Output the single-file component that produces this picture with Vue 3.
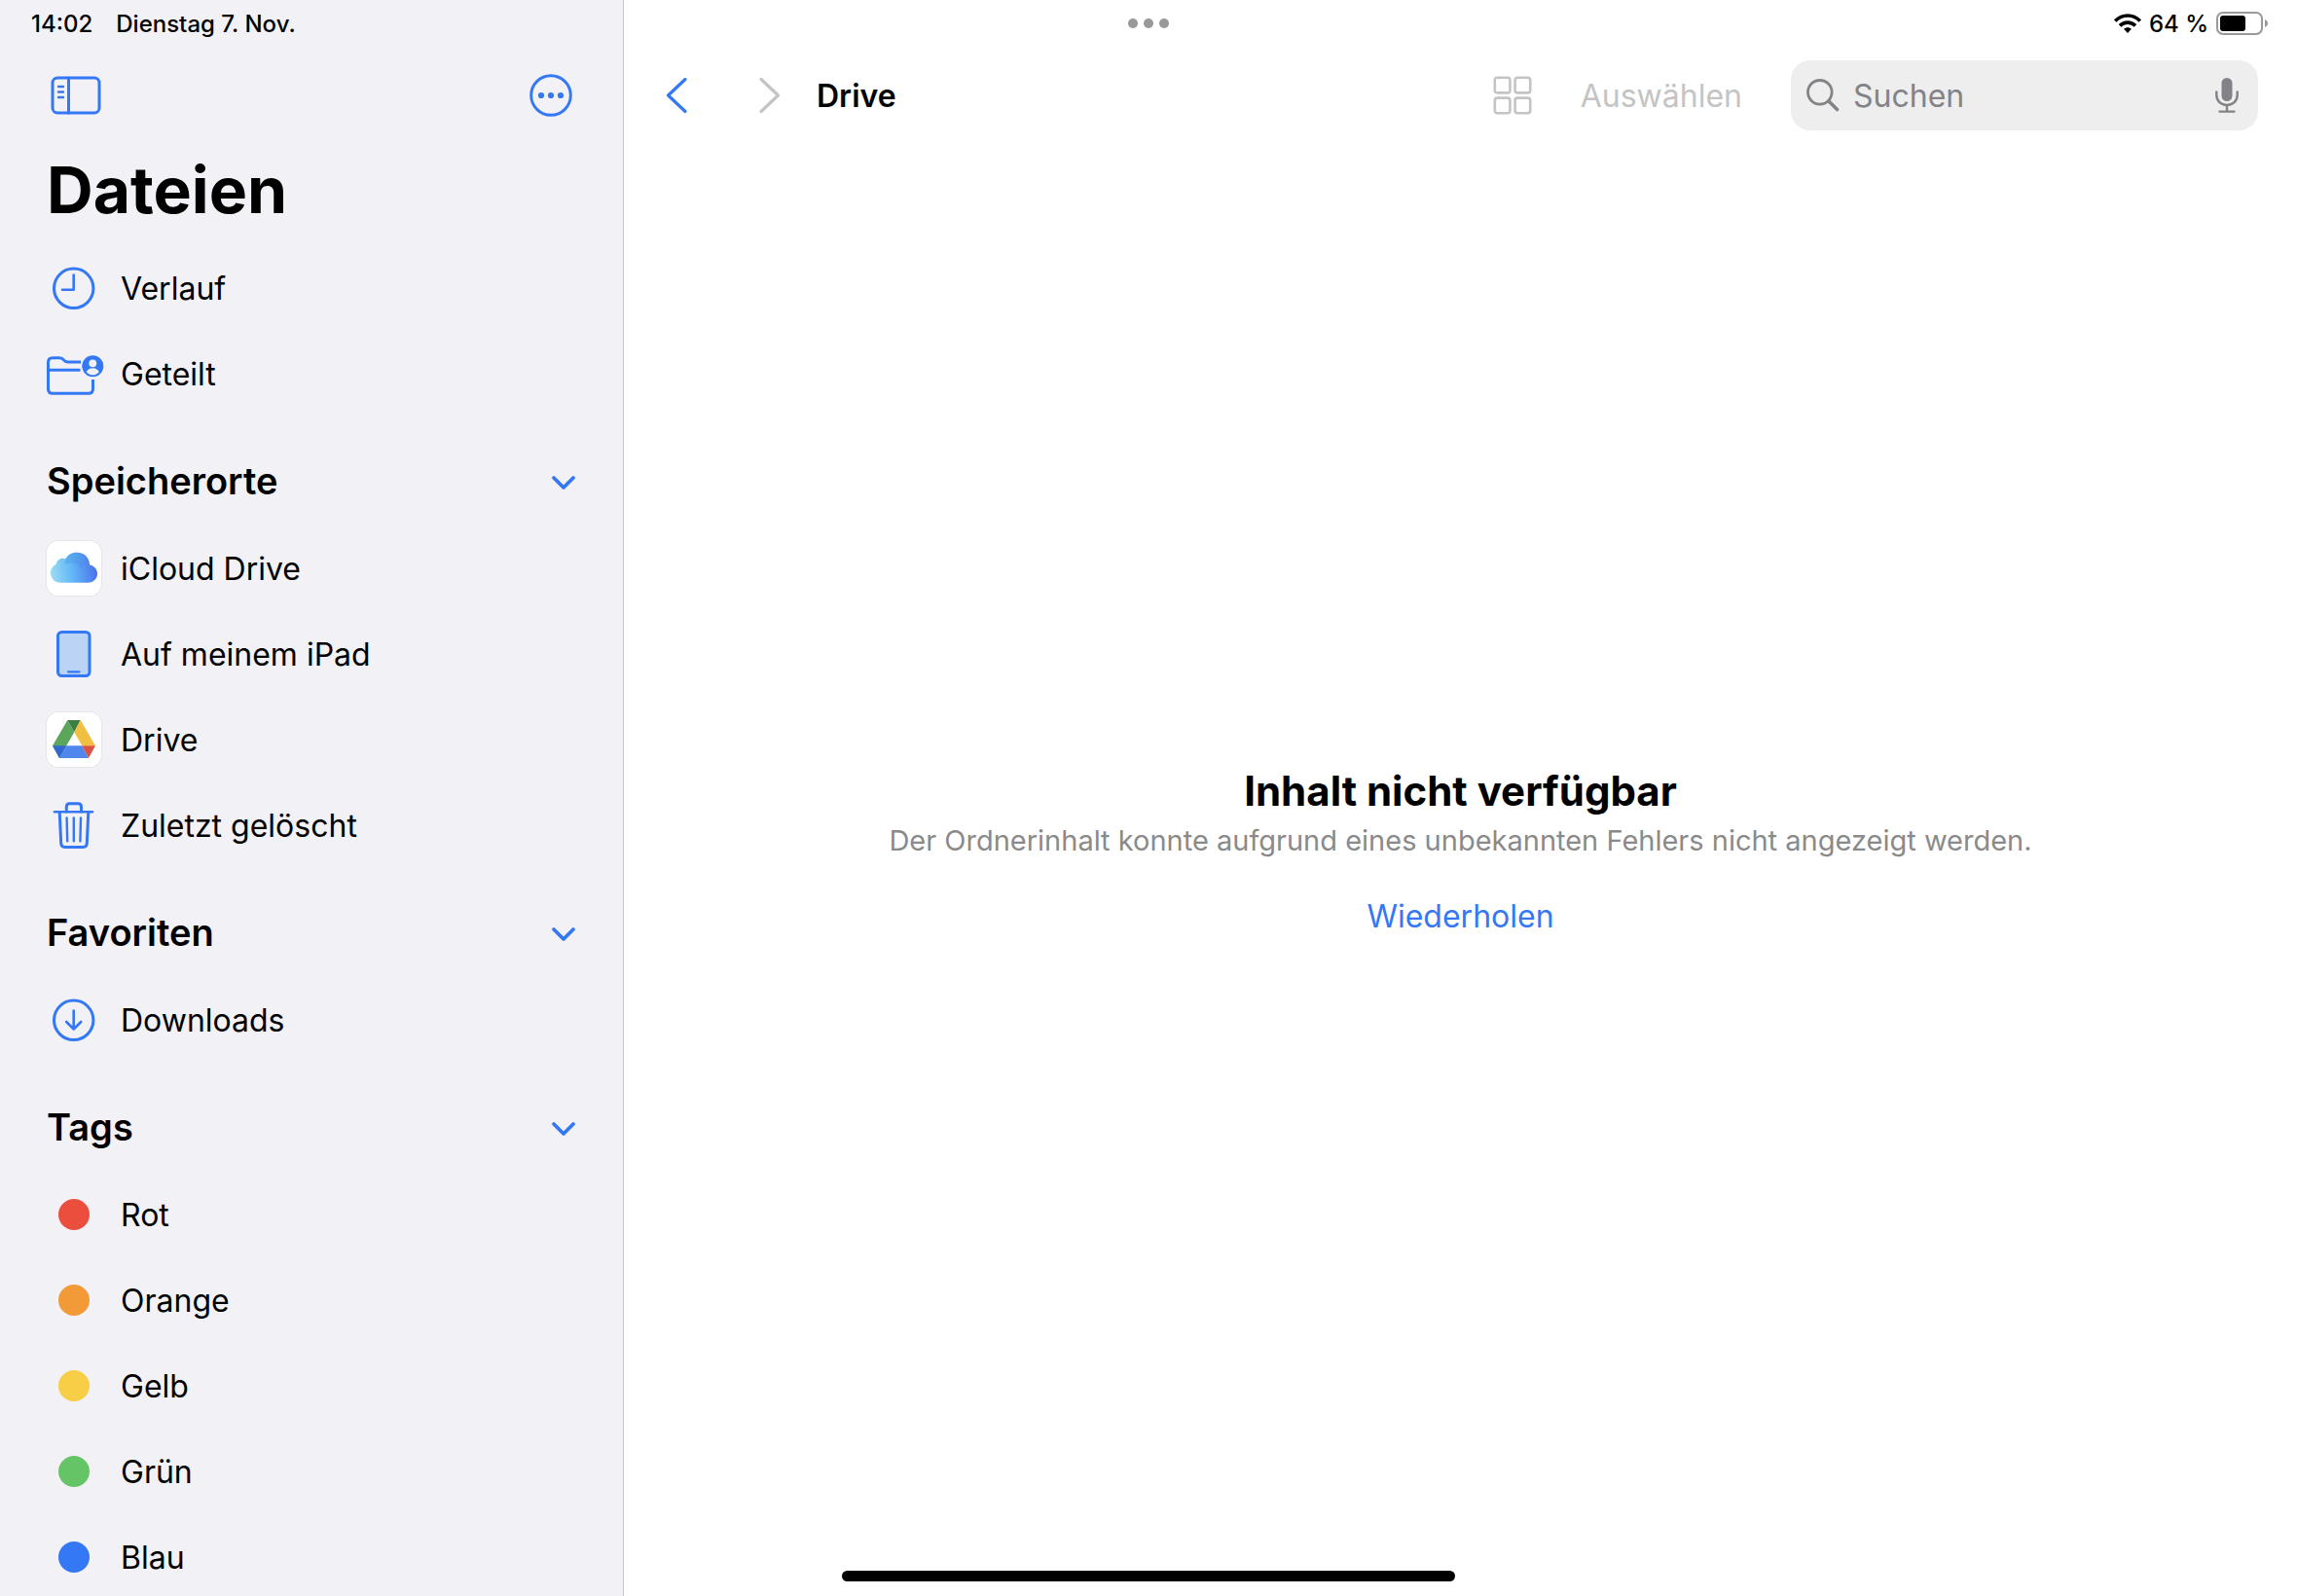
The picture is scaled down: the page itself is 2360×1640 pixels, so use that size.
<script setup>
import { ref, reactive } from 'vue'

const search = ref('')
const collapsed = reactive({})

const quickLinks = [
  { label: 'Verlauf', icon: 'clock' },
  { label: 'Geteilt', icon: 'shared' },
]

const sections = [
  {
    title: 'Speicherorte',
    items: [
      { label: 'iCloud Drive', icon: 'icloud' },
      { label: 'Auf meinem iPad', icon: 'ipad' },
      { label: 'Drive', icon: 'drive' },
      { label: 'Zuletzt gelöscht', icon: 'trash' },
    ],
  },
  {
    title: 'Favoriten',
    items: [{ label: 'Downloads', icon: 'download' }],
  },
  {
    title: 'Tags',
    items: [
      { label: 'Rot', icon: 'tag', color: 'red' },
      { label: 'Orange', icon: 'tag', color: 'orange' },
      { label: 'Gelb', icon: 'tag', color: 'yellow' },
      { label: 'Grün', icon: 'tag', color: 'green' },
      { label: 'Blau', icon: 'tag', color: 'blue' },
    ],
  },
]

const groups = [{ title: '', items: quickLinks }, ...sections]

const toggle = (title) => {
  collapsed[title] = !collapsed[title]
}
</script>

<template>
  <div class="app">
    <aside class="sidebar">
      <div class="status">
        <span>14:02</span>
        <span>Dienstag 7. Nov.</span>
      </div>

      <div class="sidebar-toolbar">
        <button class="icon-btn" type="button" aria-label="Seitenleiste">
          <svg width="52" height="44" viewBox="0 0 52 44" fill="none" stroke="currentColor" stroke-width="3" stroke-linecap="round">
            <rect x="2" y="4" width="48" height="36" rx="5" />
            <path d="M18.5 4v36" />
            <path d="M8 13h5M8 18.5h5M8 24h5" stroke-width="2.4" />
          </svg>
        </button>
        <button class="icon-btn" type="button" aria-label="Mehr">
          <svg width="44" height="44" viewBox="0 0 44 44">
            <circle cx="22" cy="22" r="20.3" fill="none" stroke="currentColor" stroke-width="2.9" />
            <g fill="currentColor">
              <circle cx="12" cy="22" r="3.1" />
              <circle cx="22" cy="22" r="3.1" />
              <circle cx="32" cy="22" r="3.1" />
            </g>
          </svg>
        </button>
      </div>

      <h1 class="title">Dateien</h1>

      <nav class="nav">
        <section v-for="g in groups" :key="g.title">
          <h2 v-if="g.title" class="section-title">
            <button class="section-btn" type="button" :aria-expanded="!collapsed[g.title]" @click="toggle(g.title)">
              <span>{{ g.title }}</span>
              <svg class="chevron" :class="{ closed: collapsed[g.title] }" width="26" height="16" viewBox="0 0 26 16" fill="none" stroke="currentColor" stroke-width="3.8" stroke-linecap="round" stroke-linejoin="round">
                <path d="M3 3l10 10L23 3" />
              </svg>
            </button>
          </h2>

          <ul v-if="!collapsed[g.title]" class="list">
            <li v-for="item in g.items" :key="item.label">
              <a class="row" href="#">
                <span v-if="item.icon === 'tag'" class="icon">
                  <span class="dot" :class="item.color"></span>
                </span>

                <svg v-else-if="item.icon === 'clock'" class="icon line" viewBox="0 0 56 56">
                  <circle cx="27.7" cy="28.3" r="20.2" />
                  <path d="M27.7 14.5v15.2H16" stroke-width="2.6" />
                </svg>

                <svg v-else-if="item.icon === 'shared'" class="icon line" viewBox="0 0 56 56">
                  <path class="butt" d="M35 16H22c-2 0-3-.6-4.2-1.8l-1.2-1.2C15.5 12 14.5 11.8 13 11.8H6c-3 0-4.5 1.5-4.5 4.5v27.5c0 3 1.500 4.500 4.500 4.500h37c3 0 4.500-1.500 4.500-4.500V34" />
                  <path class="butt" d="M1.5 24.2H34.5" />
                  <circle class="solid" cx="47.3" cy="20.3" r="11" />
                  <circle class="hole" cx="47.3" cy="17.3" r="3.9" />
                  <path class="hole" d="M40.8 26.2c1.2-2.8 3.6-4 6.5-4s5.3 1.2 6.5 4c-1.700 2-4 3.1-6.5 3.1s-4.8-1.1-6.5-3.1z" />
                </svg>

                <svg v-else-if="item.icon === 'icloud'" class="icon tile" viewBox="0 0 56 56">
                  <defs>
                    <linearGradient id="cloud" x1="4" y1="36" x2="52" y2="30" gradientUnits="userSpaceOnUse">
                      <stop offset="0" stop-color="#9edcf3" />
                      <stop offset=".45" stop-color="#62b8f7" />
                      <stop offset="1" stop-color="#4a70ec" />
                    </linearGradient>
                    <linearGradient id="puff" x1="18" y1="20" x2="44" y2="24" gradientUnits="userSpaceOnUse">
                      <stop offset="0" stop-color="#54aeea" />
                      <stop offset="1" stop-color="#4c87e8" />
                    </linearGradient>
                  </defs>
                  <path fill="url(#cloud)" d="M14 42.7c-5.6 0-10-4.3-10-9.8 0-4.2 2.3-7.6 5.8-9.1.4-3.5 3.2-6 6.7-6 1 0 2 .2 2.9.6C21.3 14.3 25.6 11.7 31 11.7c7.4 0 12.8 5.3 13 12.6 4.6 1 8 4.7 8 9.3 0 5.2-4.1 9.1-9.2 9.1z" />
                  <path fill="url(#puff)" opacity=".7" d="M19.4 18.4C21.3 14.3 25.6 11.7 31 11.7c7.4 0 12.8 5.3 13 12.6-3.6-.2-6.5 1.3-8.5 4-4.5-6-10.5-7-16.5-4.5-.6-1.8-.4-3.6.4-5.4z" />
                </svg>

                <svg v-else-if="item.icon === 'ipad'" class="icon line" viewBox="0 0 56 56">
                  <rect x="11.5" y="5.5" width="32.5" height="45" rx="4" fill="#bbd3f4" />
                  <path d="M22 46.3h11.5" stroke-width="2.2" />
                </svg>

                <svg v-else-if="item.icon === 'drive'" class="icon tile" viewBox="0 0 56 56">
                  <path fill="#5ba55c" d="M21.3 8L28.3 20.3 20.3 34.3 13 47 6 34.3z" />
                  <path fill="#3d7e40" d="M21.3 8h13.4l-6.4 12.3z" />
                  <path fill="#f1bf42" d="M34.7 8L50 34.3H36.3l-8-14z" />
                  <path fill="#3068cf" d="M6 34.3h14.3L13 47z" />
                  <path fill="#5186ec" d="M20.3 34.3h16L43 47H13z" />
                  <path fill="#d9523f" d="M36.3 34.3H50L43 47z" />
                </svg>

                <svg v-else-if="item.icon === 'trash'" class="icon line" viewBox="0 0 56 56">
                  <path d="M8 14.2h39" stroke-width="2.6" />
                  <path d="M20.3 14V9c0-2 1.2-3.2 3.2-3.2h8.800c2 0 3.2 1.2 3.2 3.2v5" />
                  <path d="M13.2 14.5l1.5 32c.1 2.600 1.5 4 4 4h18.600c2.5 0 3.900-1.400 4-4l1.5-32" />
                  <path d="M20.6 20.5l.6 23.8M27.8 20.5v23.8M35 20.5l-.6 23.8" stroke-width="2.4" />
                </svg>

                <svg v-else class="icon line" viewBox="0 0 56 56">
                  <circle cx="27.7" cy="28.3" r="20.2" />
                  <path d="M27.7 18.5v18.8M20.2 30l7.5 7.5 7.5-7.5" stroke-width="2.6" />
                </svg>

                <span>{{ item.label }}</span>
              </a>
            </li>
          </ul>
        </section>
      </nav>
    </aside>

    <main class="main">
      <div class="status status-right">
        <svg width="28" height="20" viewBox="0 0 28 20" fill="none" stroke="#000" stroke-width="3.6">
          <path d="M1.2 7.6C8.5.2 19.5.2 26.8 7.6" />
          <path d="M6 12.4c4.6-4.4 11.4-4.4 16 0" />
          <path d="M14 20l-4-4.3c2.3-2.1 5.7-2.1 8 0z" fill="#000" stroke="none" />
        </svg>
        <span>64 %</span>
        <svg width="54" height="24" viewBox="0 0 54 24">
          <rect x="1" y="1" width="46" height="22" rx="6" fill="none" stroke="#999" stroke-width="2" />
          <rect x="4" y="4" width="26" height="16" rx="3" fill="#000" />
          <path d="M50 8c4 1.5 4 6.5 0 8z" fill="#999" />
        </svg>
      </div>

      <header class="toolbar">
        <button class="icon-btn" type="button" aria-label="Zurück">
          <svg width="24" height="40" viewBox="0 0 24 40" fill="none" stroke="currentColor" stroke-width="3.2" stroke-linecap="round" stroke-linejoin="round">
            <path d="M21 3.5L3.5 20 21 36.5" />
          </svg>
        </button>
        <button class="icon-btn forward" type="button" aria-label="Vorwärts" disabled>
          <svg width="24" height="40" viewBox="0 0 24 40" fill="none" stroke="currentColor" stroke-width="3.2" stroke-linecap="round" stroke-linejoin="round">
            <path d="M3 3.5L20.5 20 3 36.5" />
          </svg>
        </button>
        <h2 class="folder">Drive</h2>

        <div class="actions">
          <button class="icon-btn" type="button" aria-label="Darstellung" disabled>
            <svg width="40" height="40" viewBox="0 0 40 40" fill="none" stroke="currentColor" stroke-width="2.6">
              <rect x="1.8" y="1.8" width="15.6" height="15.6" rx="2.5" />
              <rect x="22.6" y="1.8" width="15.6" height="15.6" rx="2.5" />
              <rect x="1.8" y="22.6" width="15.6" height="15.6" rx="2.5" />
              <rect x="22.6" y="22.6" width="15.6" height="15.6" rx="2.5" />
            </svg>
          </button>
          <button class="select-btn" type="button" disabled>Auswählen</button>
          <div class="search">
            <svg width="34" height="34" viewBox="0 0 34 34" fill="none" stroke="currentColor" stroke-linecap="round">
              <circle cx="13.8" cy="13.8" r="12.3" stroke-width="2.8" />
              <path d="M23 23l8.5 8.5" stroke-width="3.6" />
            </svg>
            <input v-model="search" type="text" placeholder="Suchen" aria-label="Suchen" />
            <button class="icon-btn mic" type="button" aria-label="Diktieren">
              <svg width="24" height="36" viewBox="0 0 24 36" fill="none" stroke="currentColor" stroke-width="2.4" stroke-linecap="round">
                <rect x="6.5" y="0" width="11" height="24" rx="5.5" fill="currentColor" stroke="none" />
                <path d="M1.3 14.5v3C1.3 24 6 28 12 28s10.7-4 10.7-10.5v-3M12 28.5V34M4.5 34.6h15" />
              </svg>
            </button>
          </div>
        </div>
      </header>

      <div class="empty">
        <h3 class="empty-title">Inhalt nicht verfügbar</h3>
        <p class="empty-text">Der Ordnerinhalt konnte aufgrund eines unbekannten Fehlers nicht angezeigt werden.</p>
        <button class="retry" type="button">Wiederholen</button>
      </div>
    </main>

    <!-- system overlays -->
    <div class="multitask"><i></i><i></i><i></i></div>
    <div class="home-bar"></div>
  </div>
</template>

<style>
body {
  margin: 0;
  background: #fff;
}
</style>

<style scoped>
.app {
  position: relative;
  display: flex;
  height: 100vh;
  overflow: hidden;
  font-family: Inter, "Liberation Sans", sans-serif;
  font-size: 32px;
  color: #000;
}

h1,
h2,
h3,
p,
ul {
  margin: 0;
  padding: 0;
}

button {
  padding: 0;
  border: 0;
  background: none;
  font: inherit;
  color: #3478f6;
}

button:disabled {
  color: #c4c4c4;
}

svg {
  display: block;
  flex: none;
}

.status {
  display: flex;
  align-items: center;
  gap: 24px;
  flex: none;
  height: 48px;
  padding: 0 32px;
  font-size: 24px;
  font-weight: 500;
}

.status-right {
  justify-content: flex-end;
  gap: 8px;
  padding: 0 29px;
}

.icon-btn {
  display: flex;
}

/* Sidebar */
.sidebar {
  display: flex;
  flex-direction: column;
  flex: 0 0 640px;
  border-right: 1px solid #c6c6c8;
  background: #f2f1f6;
}

.sidebar-toolbar {
  display: flex;
  align-items: center;
  justify-content: space-between;
  flex: none;
  height: 100px;
  padding: 0 52px;
}

.title {
  flex: none;
  padding: 0 48px 10px;
  font-size: 66px;
  font-weight: 700;
  line-height: 94px;
}

.nav {
  flex: 1;
  min-height: 0;
  overflow-y: auto;
  scrollbar-width: none;
}

.section-title {
  font-size: 38px;
  font-weight: 600;
}

.section-btn {
  display: flex;
  align-items: center;
  justify-content: space-between;
  width: 100%;
  height: 112px;
  padding: 20px 48px 0;
}

.section-btn span {
  color: #000;
}

.chevron {
  margin-top: 4px;
}

.chevron.closed {
  transform: rotate(-90deg);
}

.list {
  list-style: none;
}

.row {
  display: flex;
  align-items: center;
  gap: 20px;
  height: 88px;
  padding: 0 48px;
  color: #000;
  text-decoration: none;
}

.icon {
  display: flex;
  align-items: center;
  justify-content: center;
  flex: none;
  width: 56px;
  height: 56px;
  overflow: visible;
}

.line {
  fill: none;
  stroke: #3478f6;
  stroke-width: 3;
  stroke-linecap: round;
  stroke-linejoin: round;
}

.butt {
  stroke-linecap: butt;
}

.solid {
  fill: #3478f6;
  stroke: none;
}

.hole {
  fill: #f2f1f6;
  stroke: none;
}

.tile {
  border-radius: 12px;
  background: #fff;
  box-shadow: 0 0 0 1px #e7e6eb;
}

.dot {
  width: 32px;
  height: 32px;
  border-radius: 50%;
}

.red {
  background: #eb4e3d;
}

.orange {
  background: #f19a37;
}

.yellow {
  background: #f7ce45;
}

.green {
  background: #65c466;
}

.blue {
  background: #3478f6;
}

/* Main */
.main {
  display: flex;
  flex-direction: column;
  flex: 1;
  min-width: 0;
}

.toolbar {
  display: flex;
  align-items: center;
  flex: none;
  height: 100px;
  padding: 0 40px 0 42px;
}

.forward {
  margin-left: 72px;
}

.folder {
  margin-left: 36px;
  font-size: 32px;
  font-weight: 600;
}

.actions {
  display: flex;
  align-items: center;
  margin-left: auto;
}

.select-btn {
  margin: 0 50px;
}

.search {
  display: flex;
  align-items: center;
  gap: 14px;
  box-sizing: border-box;
  width: 480px;
  height: 72px;
  padding: 0 20px 0 16px;
  border-radius: 20px;
  background: #eee;
  color: #838387;
}

.search input {
  flex: 1;
  min-width: 0;
  padding: 0;
  border: 0;
  outline: 0;
  background: none;
  font: inherit;
  color: #000;
}

.search input::placeholder {
  color: #838387;
  opacity: 1;
}

.mic {
  color: #838387;
}

.empty {
  display: flex;
  flex: 1;
  flex-direction: column;
  align-items: center;
  justify-content: center;
  padding-bottom: 36px;
  text-align: center;
}

.empty-title {
  font-size: 42px;
  font-weight: 700;
  line-height: 54px;
}

.empty-text {
  font-size: 29px;
  line-height: 48px;
  color: #8a8a8a;
}

.retry {
  margin-top: 30px;
  line-height: 48px;
}

.multitask {
  position: absolute;
  top: 19px;
  left: 50%;
  display: flex;
  gap: 6px;
  transform: translateX(-50%);
}

.multitask i {
  width: 10px;
  height: 10px;
  border-radius: 50%;
  background: #999;
}

.home-bar {
  position: absolute;
  bottom: 15px;
  left: 50%;
  width: 630px;
  height: 11px;
  border-radius: 6px;
  background: #000;
  transform: translateX(-50%);
}
</style>
